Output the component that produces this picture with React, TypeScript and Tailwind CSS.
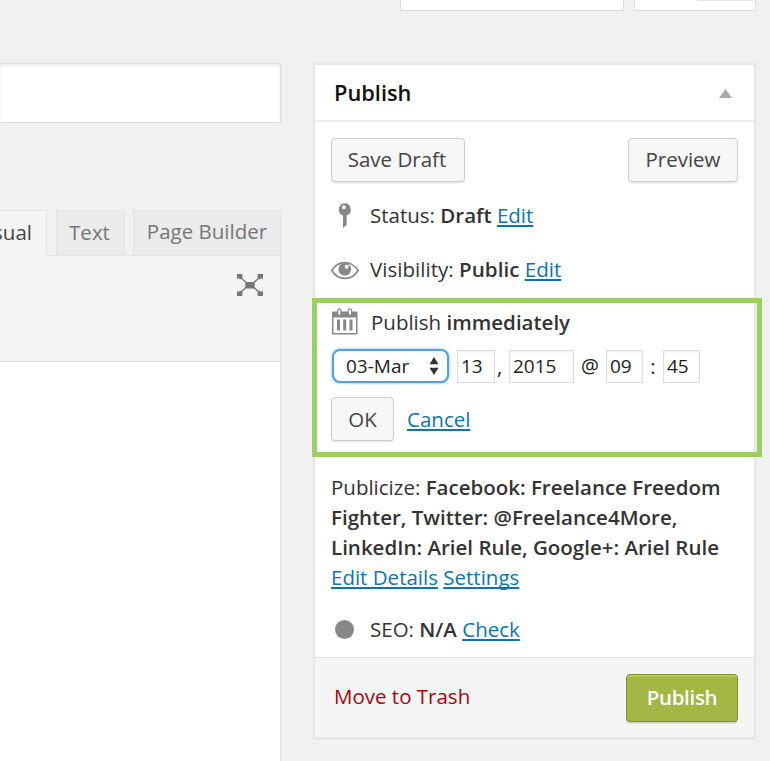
import { useState, type ReactNode } from 'react'

function Link({ children }: { children: ReactNode }) {
  return (
    <a href="#" className="text-[#0e74aa] underline decoration-[1.5px] underline-offset-[2px] [text-decoration-skip-ink:none]">
      {children}
    </a>
  )
}

function PinIcon() {
  return (
    <svg width="28" height="28" viewBox="0 0 28 28" className="shrink-0">
      <path fill="#888" fillRule="evenodd" d="M13.500 2.300a6.300 6.300 0 0 1 2.200 12.200v9.500l-3.700 3V14.500A6.300 6.300 0 0 1 13.500 2.300zM12.800 4.300a2 2 0 1 0 0 4 2 2 0 0 0 0-4z" />
    </svg>
  )
}

function EyeIcon() {
  return (
    <svg width="28" height="28" viewBox="0 0 28 28" className="shrink-0">
      <path fill="none" stroke="#888" strokeWidth="1.700" d="M.9 15.500C3.500 11 8.500 7.700 13.800 7.700S24.500 11 27.100 15.500C24.500 20 19.500 23.300 13.800 23.300S3.500 20 .9 15.500z" />
      <circle cx="13.800" cy="14.300" r="6.300" fill="#888" />
      <circle cx="15.600" cy="11.700" r="2" fill="#fff" />
    </svg>
  )
}

function CalendarIcon() {
  return (
    <svg width="28" height="28" viewBox="0 0 28 28" className="shrink-0">
      <path fill="#888" d="M1 3.500h25.500v23H1z" />
      <path fill="#fff" d="M2.500 9.500H25V25H2.500z" />
      <path fill="#888" d="M6 11.500h3v11H6zM12.200 11.500h3v11h-3zM18.500 11.500h3v11h-3z" />
      <rect x="6.700" y=".8" width="3.200" height="6.500" rx="1.600" fill="#fff" stroke="#888" strokeWidth="1.200" />
      <rect x="17.300" y=".8" width="3.200" height="6.500" rx="1.600" fill="#fff" stroke="#888" strokeWidth="1.200" />
    </svg>
  )
}

function FullscreenIcon() {
  return (
    <svg width="26" height="24" viewBox="0 0 26 24">
      <path stroke="#777" strokeWidth="1.300" d="M3 4l6 5.500M23 4l-6 5.500M3 20l6-5.500M23 20l-6-5.500" />
      <path fill="#777" d="M8.300 9h9.400v6.500H8.300zM0 1h6L4.800 2.200 6 3.800 3.200 6.500 1.700 5 0 6.500zM26 1h-6l1.200 1.200L20 3.800l2.800 2.700L24.300 5 26 6.500zM0 23h6l-1.200-1.200L6 20.200l-2.800-2.700L1.700 19 0 17.500zM26 23h-6l1.200-1.200-1.200-1.600 2.800-2.700 1.500 1.500 1.700-1.500z" />
    </svg>
  )
}

function Button({ className, children }: { className: string; children: ReactNode }) {
  return (
    <button className={`h-[44px] rounded-[4px] border-[1.5px] border-[#ccc] bg-[#f7f7f7] text-[#444] shadow-[0_1.500px_0_rgba(0,0,0,0.08)] ${className}`}>
      {children}
    </button>
  )
}

function TimeField({ value, className }: { value: string; className: string }) {
  return (
    <input
      defaultValue={value}
      className={`h-[33px] border-[1.5px] border-[#ddd] bg-white pl-[3px] text-[19px] text-[#222] shadow-[inset_0_1px_3px_rgba(0,0,0,0.07)] outline-none ${className}`}
    />
  )
}

function Editor() {
  return (
    <div className="w-[281px] shrink-0">
      <div className="h-[60px] border-[1.5px] border-l-0 border-[#ddd] bg-white shadow-[inset_0_2px_3px_rgba(0,0,0,0.07)]" />
      <div className="mt-[87px] flex h-[46px] leading-[43px] text-[#777]">
        <div className="relative z-10 flex w-[47px] justify-end border-t border-r border-[#e2e2e2] bg-[#f4f4f4] pr-[14px] text-[#444]">
          Visual
        </div>
        <div className="ml-[9px] h-[45px] w-[69px] border border-b-0 border-[#e2e2e2] bg-[#ebebeb] pr-[2px] text-center">Text</div>
        <div className="ml-2 h-[45px] w-[148px] border border-b-0 border-[#e2e2e2] bg-[#ebebeb] text-center leading-[41px]">
          Page Builder
        </div>
      </div>
      <div className="-mt-px h-[520px] border-t border-r border-[#e2e2e2] bg-white">
        <div className="flex h-[106px] justify-end border-b border-[#dcdcdc] bg-[#f4f4f4] pt-[17px] pr-[17px]">
          <FullscreenIcon />
        </div>
      </div>
    </div>
  )
}

function PublishBox() {
  const [open, setOpen] = useState(true)

  return (
    <div className="relative ml-8 h-[676px] w-[443px] shrink-0">
      <div className="flex h-full flex-col border-2 border-[#e6e6e6] bg-white shadow-[0_1px_1px_rgba(0,0,0,0.04)]">
        <div className="flex h-[57px] shrink-0 items-center justify-between border-b-2 border-[#eee] pt-px pr-[22px] pl-[19px]">
          <h2 className="text-[21.800px] font-semibold text-[#111]">Publish</h2>
          <button onClick={() => setOpen(!open)}>
            <svg width="13" height="9" viewBox="0 0 13 9">
              <path fill="#aaa" d="M6.500 0L13 9H0z" />
            </svg>
          </button>
        </div>

        <div className="flex-1 px-4">
          <div className="flex justify-between pt-4">
            <Button className="w-[134px] pr-[2px] pb-px">Save Draft</Button>
            <Button className="w-[110px] pb-px">Preview</Button>
          </div>
          <div className="mt-[18px] flex h-[30px] items-center gap-[11px]">
            <PinIcon />
            <p>Status: <b className="font-semibold">Draft</b> <Link>Edit</Link></p>
          </div>
          <div className="mt-6 flex h-[30px] items-center gap-[11px] text-[20.600px]">
            <EyeIcon />
            <p>Visibility: <b className="font-semibold">Public</b> <Link>Edit</Link></p>
          </div>
          <div className="mt-[23px] flex h-[30px] items-center gap-[12px]">
            <CalendarIcon />
            <p>Publish <b className="font-semibold">immediately</b></p>
          </div>
          <div className="mt-[12px] flex h-[34px] items-center text-[#222]">
            <button className="ml-px flex h-[34px] w-[117px] items-center justify-between rounded-[8px] border-2 border-[#4fa3e3] bg-white pr-2 pl-[12px] text-[19px] shadow-[0_0_3px_rgba(30,140,190,0.6)]">
              03-Mar
              <svg width="10" height="18" viewBox="0 0 10 18">
                <path fill="#333" d="M5 0l4.500 7.300H.5zM5 18l4.500-7.300H.5z" />
              </svg>
            </button>
            <TimeField value="13" className="ml-2 w-[38px]" />
            <span className="w-[14px] pl-[2px]">,</span>
            <TimeField value="2015" className="w-[65px]" />
            <span className="w-8 text-center text-[20px]">@</span>
            <TimeField value="09" className="w-[37px]" />
            <span className="w-5 text-center">:</span>
            <TimeField value="45" className="w-[37px]" />
          </div>
          <div className="mt-[14px] flex items-center gap-[13px]">
            <Button className="w-[63px]">OK</Button>
            <Link>Cancel</Link>
          </div>
          <p className="mt-[31px] leading-[30px] whitespace-nowrap">
            Publicize:{' '}
            <b className="font-semibold">
              Facebook: Freelance Freedom
              <br />
              Fighter, Twitter: @Freelance4More,
              <br />
              LinkedIn: Ariel Rule, Google+: Ariel Rule
            </b>
            <br />
            <Link>Edit Details</Link> <Link>Settings</Link>
          </p>
          <div className="mt-[22px] flex h-[30px] items-center gap-[11px]">
            <span className="mr-[5px] ml-[4px] size-[19px] shrink-0 rounded-full bg-[#888]" />
            <p>SEO: <b className="font-semibold">N/A</b> <Link>Check</Link></p>
          </div>
        </div>

        <div className="flex h-[80px] shrink-0 items-center justify-between border-t border-[#ddd] bg-[#f5f5f5] pr-4 pl-[19px]">
          <a href="#" className="pb-[3px] text-[#a9040b]">Move to Trash</a>
          <button className="h-[48px] w-[112px] rounded-[4px] border-[1.5px] border-[#7e902f] bg-[#a3b745] font-semibold tracking-[-0.3px] text-white shadow-[inset_0_1.500px_0_#bccb74,0_1.500px_0_rgba(0,0,0,0.15)]">
            Publish
          </button>
        </div>
      </div>

      <div className="pointer-events-none absolute top-[235px] -left-px h-[159px] w-[450px] border-[5px] border-[#99d065]" />
    </div>
  )
}

export default function App() {
  return (
    <div className="h-[761px] w-[770px] overflow-hidden bg-[#f1f1f1] font-['Open_Sans',sans-serif] text-[20.500px] text-[#333]">
      <div className="flex h-[11px] gap-[10px] pl-[400px]">
        <div className="w-[224px] border-[1.5px] border-t-0 border-[#ddd] bg-white" />
        <div className="flex w-[122px] justify-end border-[1.5px] border-t-0 border-[#ddd] bg-white">
          <div className="h-px w-[58px] bg-[#e4e4e4]" />
        </div>
      </div>
      <div className="mt-[52px] flex">
        <Editor />
        <PublishBox />
      </div>
    </div>
  )
}
